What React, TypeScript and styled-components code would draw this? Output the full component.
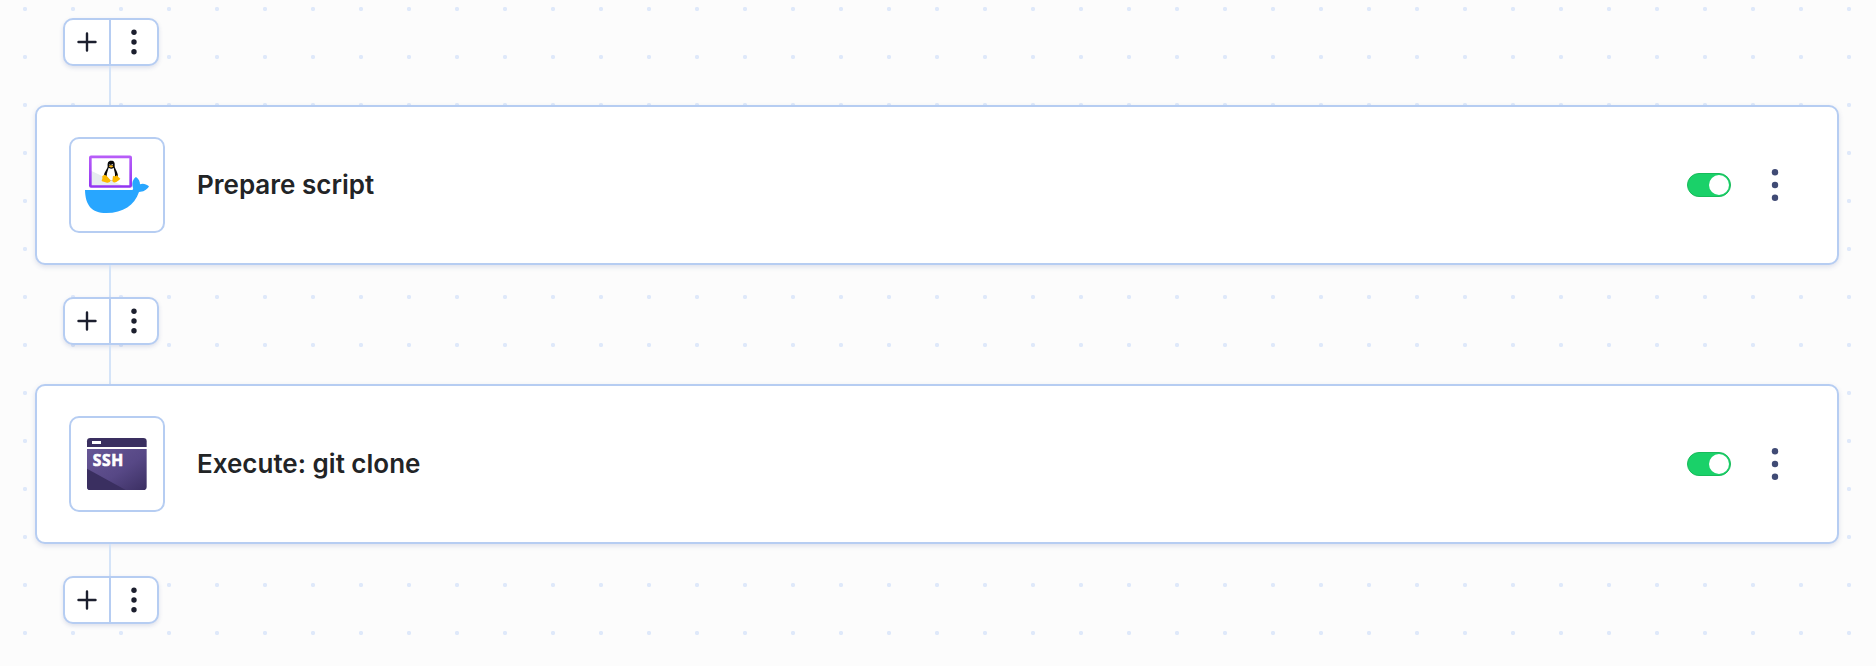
import React from "react";
import styled, { createGlobalStyle } from "styled-components";

const GlobalStyle = createGlobalStyle`
  * { box-sizing: border-box; }
  body { margin: 0; background: #fcfcfc; font-family: Inter, "Liberation Sans", sans-serif; }
`;

const Canvas = styled.main`
  display: flex;
  flex-direction: column;
  width: 1876px;
  height: 666px;
  overflow: hidden;
  padding: 18px 37px 0 35px;
  background-color: #fcfcfc;
  background-image: radial-gradient(circle at center, #dfe9fa 1.9px, rgba(223, 233, 250, 0) 2.4px);
  background-size: 48px 48px;
  background-position: 1px -15px;
`;

const Connector = styled.div<{ $length: number }>`
  flex: none;
  width: 2px;
  height: ${(p) => p.$length}px;
  margin-left: 74px;
  background: #d5e4f8;
`;

const StepControls = styled.div`
  flex: none;
  display: flex;
  width: 96px;
  height: 48px;
  margin-left: 28px;
  border: 2px solid #b6cdf2;
  border-radius: 10px;
  background: #fff;
  box-shadow: 0 2px 4px rgba(60, 80, 150, 0.16);
`;

const ControlButton = styled.button<{ $divided?: boolean }>`
  display: flex;
  align-items: center;
  justify-content: center;
  width: 46px;
  padding: 0;
  border: 0;
  border-right: ${(p) => (p.$divided ? "2px solid #b6cdf2" : "0")};
  background: none;
  color: #1c1f2e;
`;

const StepCard = styled.section`
  flex: none;
  display: flex;
  align-items: center;
  height: 160px;
  padding: 0 50px 0 32px;
  border: 2px solid #b6cdf2;
  border-radius: 10px;
  background: #fff;
  box-shadow: 0 2px 5px rgba(60, 80, 150, 0.16);
`;

const IconTile = styled.div`
  flex: none;
  width: 96px;
  height: 96px;
  border: 2px solid #b6cdf2;
  border-radius: 10px;
  background: #fff;

  svg { display: block; }
`;

const StepTitle = styled.h2`
  flex: 1;
  margin: 0 0 0 32px;
  color: #222426;
  font-size: 26px;
  font-weight: 600;
  line-height: 36px;
`;

const Toggle = styled.button`
  display: flex;
  align-items: center;
  justify-content: flex-end;
  width: 44px;
  height: 24px;
  padding: 0 1px 0 0;
  border: 1px solid #18bb5b;
  border-radius: 12px;
  background: #1ad169;
`;

const Knob = styled.span`
  width: 20px;
  height: 20px;
  border-radius: 50%;
  background: #fff;
`;

const MenuButton = styled.button`
  display: flex;
  align-items: center;
  justify-content: center;
  width: 24px;
  height: 40px;
  margin-left: 32px;
  padding: 0;
  border: 0;
  background: none;
  color: #404b75;
`;

const PlusIcon = () => (
  <svg width="24" height="24" viewBox="0 0 24 24" stroke="currentColor" strokeWidth="2.4" strokeLinecap="round">
    <path d="M12 3.500v17M3.500 12h17" />
  </svg>
);

const DotsIcon = ({ gap, radius }: { gap: number; radius: number }) => (
  <svg width="24" height="40" viewBox="-12 -20 24 40" fill="currentColor">
    <circle cy={-gap} r={radius} />
    <circle r={radius} />
    <circle cy={gap} r={radius} />
  </svg>
);

const DockerScriptIcon = () => (
  <svg width="92" height="92" viewBox="33 27 276 276">
    <defs>
      <linearGradient id="frame" x1="0" y1="0" x2="0" y2="1">
        <stop offset="0" stopColor="#b75cf8" />
        <stop offset="1" stopColor="#9335f2" />
      </linearGradient>
    </defs>
    <rect x="91" y="80.500" width="121" height="89" rx="3" fill="#fff" />
    <path d="M93 122L190 168H93Z" fill="#e6ecef" />
    <rect x="91" y="80.500" width="121" height="89" rx="2" fill="none" stroke="url(#frame)" strokeWidth="8" />
    <path d="M153.500 92C144 92 142 99 143 109C143 117 133 124 131 140L140 152H166L174 141C175 127 164 117 164 108C165 98 163 92 153.500 92Z" fill="#080808" />
    <path d="M146 113C152 117 156 117 161 113C162 122 166 128 165 138L161 152H146L140 138C140 128 144 121 146 113Z" fill="#fff" />
    <circle cx="149.500" cy="104" r="1.500" fill="#fff" />
    <circle cx="156.500" cy="104" r="2" fill="#fff" />
    <path d="M146 109Q153 103 160 109Q154 116 146 109Z" fill="#f7b414" />
    <path d="M127 138L134 134Q140 135 145 143L152 151Q151 159 141 158L126 154Q123 151 127 147Z" fill="#fcb900" />
    <path d="M159 137Q166 142 171 135L175 141L181 146Q178 150 169 156Q159 160 157 153Z" fill="#fcb900" />
    <path d="M75 180H214C219 180 221 177 218 170C215 158 219 147 228 141C236 146 240 154 240 163C248 159 259 162 267 169C260 181 249 186 237 186C223 226 190 249 139 249C94 249 76 225 75 180Z" fill="#28a6ff" />
  </svg>
);

const SshIcon = () => (
  <svg width="92" height="92" viewBox="33 24 276 276">
    <defs>
      <linearGradient id="screen" x1="0" y1="0" x2="1" y2="1">
        <stop offset="0" stopColor="#675795" />
        <stop offset="0.550" stopColor="#574886" />
        <stop offset="1" stopColor="#3b2f62" />
      </linearGradient>
    </defs>
    <path d="M81 111V94Q81 84 91 84H250Q260 84 260 94V111Z" fill="#3a2f60" />
    <rect x="96" y="93" width="27" height="9" fill="#fff" />
    <path d="M81 117H260V230Q260 240 250 240H91Q81 240 81 230Z" fill="url(#screen)" />
    <path d="M81 176L197 240H91Q81 240 81 230Z" fill="#3a2f60" />
    <text x="98.500" y="167.500" fill="#fff" stroke="#fff" strokeWidth="2" fontFamily="'Open Sans', sans-serif" fontSize="47" fontWeight="700" textLength="91" lengthAdjust="spacing">SSH</text>
  </svg>
);

const Controls = () => (
  <StepControls>
    <ControlButton $divided aria-label="Add step"><PlusIcon /></ControlButton>
    <ControlButton aria-label="Step options"><DotsIcon gap={9.700} radius={2.700} /></ControlButton>
  </StepControls>
);

const Step = ({ title, icon }: { title: string; icon: React.ReactNode }) => (
  <StepCard>
    <IconTile>{icon}</IconTile>
    <StepTitle>{title}</StepTitle>
    <Toggle role="switch" aria-checked="true" aria-label="Enabled"><Knob /></Toggle>
    <MenuButton aria-label="More"><DotsIcon gap={12.800} radius={3.200} /></MenuButton>
  </StepCard>
);

const steps = [
  { title: "Prepare script", icon: <DockerScriptIcon /> },
  { title: "Execute: git clone", icon: <SshIcon /> },
];

export default function App() {
  return (
    <>
      <GlobalStyle />
      <Canvas>
        <Controls />
        {steps.map((step) => (
          <React.Fragment key={step.title}>
            <Connector $length={39} />
            <Step title={step.title} icon={step.icon} />
            <Connector $length={32} />
            <Controls />
          </React.Fragment>
        ))}
      </Canvas>
    </>
  );
}
